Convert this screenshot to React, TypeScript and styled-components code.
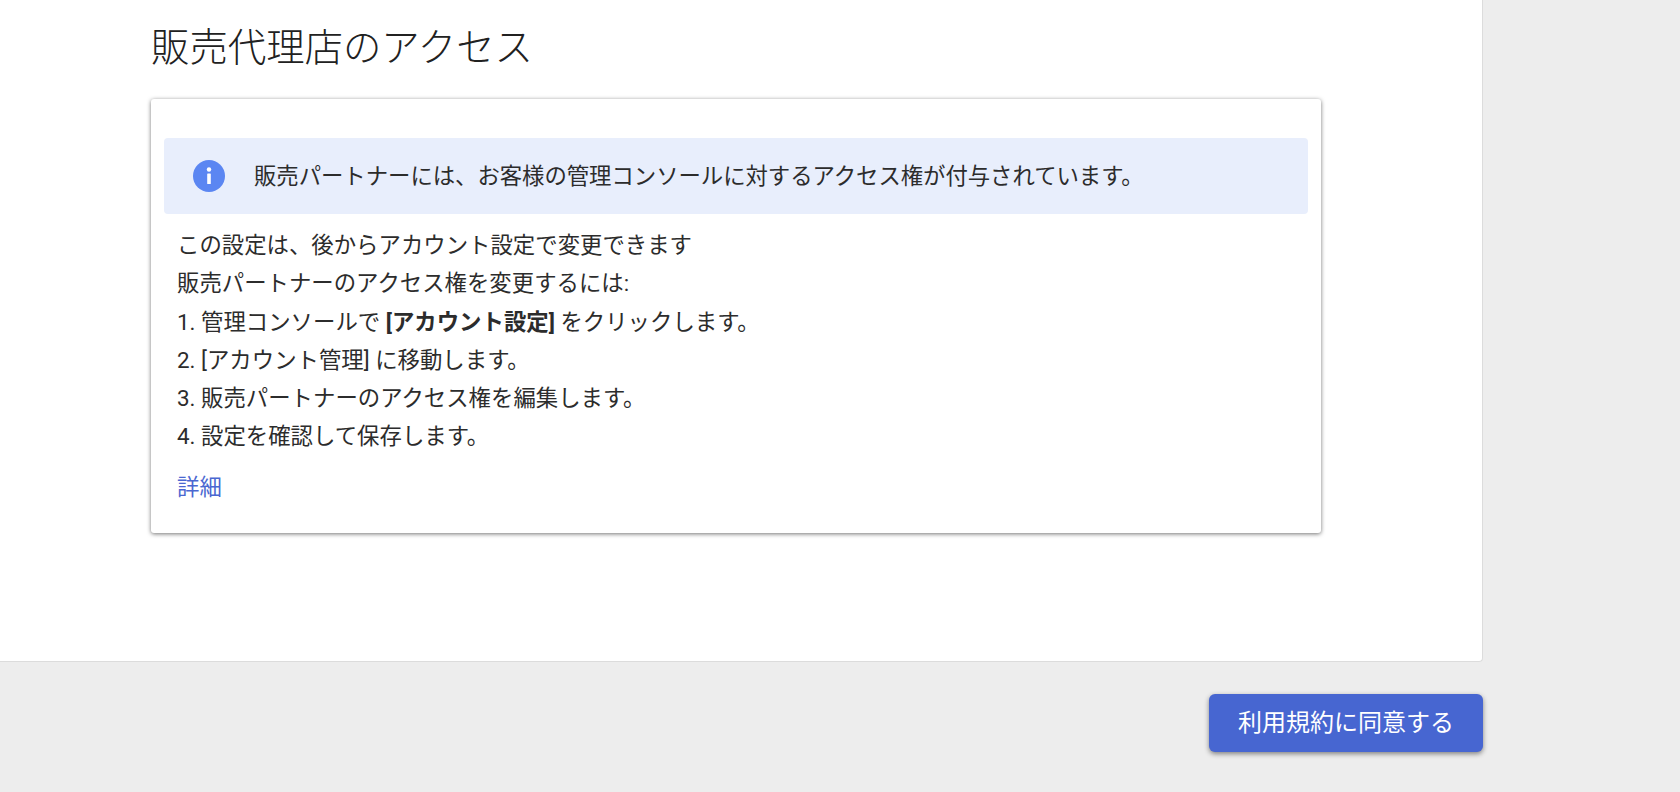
import React from "react";
import styled, { createGlobalStyle } from "styled-components";

const Global = createGlobalStyle`
  html, body { margin: 0; padding: 0; background: #ededed; overflow: hidden; }
  body { font-family: Roboto, "Noto Sans CJK JP", sans-serif; color: #2c2c2c; }
`;

const Page = styled.div`
  width: 1680px;
  height: 792px;
  display: flex;
  flex-direction: column;
  overflow: hidden;
`;

const Panel = styled.main`
  box-sizing: border-box;
  width: 1483px;
  height: 662px;
  flex: none;
  background: #fff;
  border-right: 1px solid #dcdcdc;
  border-bottom: 1px solid #dcdcdc;
  border-bottom-right-radius: 4px;
  padding: 22px 0 0 151px;
`;

const Title = styled.h1`
  margin: 0 0 25px;
  font-size: 38.4px;
  font-weight: 300;
  line-height: 52px;
  color: #212121;
`;

const Card = styled.section`
  box-sizing: border-box;
  width: 1170px;
  height: 434px;
  padding: 39px 13px 0 13px;
  background: #fff;
  border-radius: 3px;
  box-shadow: 0 1px 4px rgba(0, 0, 0, 0.55);
`;

const Alert = styled.div`
  height: 76px;
  display: flex;
  align-items: center;
  gap: 29px;
  padding-left: 29px;
  background: #e8eefc;
  border-radius: 4px;
  font-size: 22.4px;
  letter-spacing: -0.05px;
`;

const AlertText = styled.span`
  padding-bottom: 5px;
`;

const InfoIcon = styled.svg`
  width: 32px;
  height: 32px;
  flex: none;
`;

const Body = styled.div`
  padding: 12px 13px 0;
  font-size: 22.4px;
  line-height: 38.3px;
`;

const Line = styled.div``;

const DetailLink = styled.a`
  display: block;
  margin-top: 12px;
  color: #4a67d1;
  text-decoration: none;
`;

const Footer = styled.footer`
  width: 1483px;
  display: flex;
  justify-content: flex-end;
  padding-top: 32px;
`;

const AcceptButton = styled.button`
  width: 274px;
  height: 58px;
  padding: 0 0 5px;
  border: 0;
  border-radius: 6px;
  background: #4766d1;
  color: #fff;
  font: 400 24px Roboto, "Noto Sans CJK JP", sans-serif;
  box-shadow: 0 2px 5px rgba(0, 0, 0, 0.45);
`;

export default function App() {
  return (
    <Page>
      <Global />
      <Panel>
        <Title>販売代理店のアクセス</Title>
        <Card>
          <Alert>
            <InfoIcon viewBox="0 0 32 32">
              <circle cx="16" cy="16" r="16" fill="#5b86f2" />
              <circle cx="16" cy="9.5" r="2.2" fill="#fff" />
              <rect x="14.2" y="13.5" width="3.6" height="10.5" rx="0.6" fill="#fff" />
            </InfoIcon>
            <AlertText>販売パートナーには、お客様の管理コンソールに対するアクセス権が付与されています。</AlertText>
          </Alert>
          <Body>
            <Line>この設定は、後からアカウント設定で変更できます</Line>
            <Line>販売パートナーのアクセス権を変更するには:</Line>
            <Line>1. 管理コンソールで <b>[アカウント設定]</b> をクリックします。</Line>
            <Line>2. [アカウント管理] に移動します。</Line>
            <Line>3. 販売パートナーのアクセス権を編集します。</Line>
            <Line>4. 設定を確認して保存します。</Line>
            <DetailLink href="#">詳細</DetailLink>
          </Body>
        </Card>
      </Panel>
      <Footer>
        <AcceptButton>利用規約に同意する</AcceptButton>
      </Footer>
    </Page>
  );
}
